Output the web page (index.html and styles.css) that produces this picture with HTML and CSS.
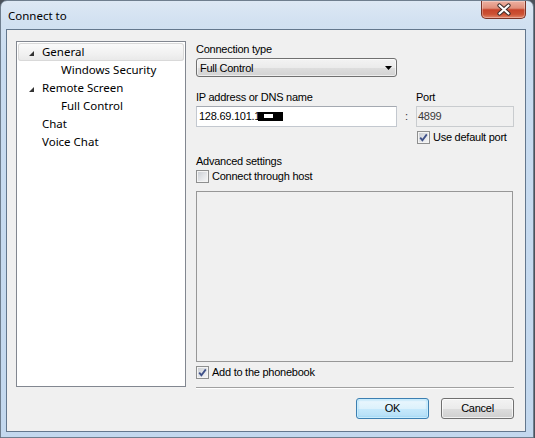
FILE: index.html
```html
<!DOCTYPE html>
<html>
<head>
<meta charset="utf-8">
<title>Connect to</title>
<link rel="stylesheet" href="styles.css">
</head>
<body>
<div class="window">
  <div class="titlebar">
    <span class="title">Connect to</span>
    <div class="close">
      <svg width="45" height="18" viewBox="0 0 45 18">
        <path d="M18.5 4.5 L27.5 12.5 M27.5 4.5 L18.5 12.5" stroke="#3a2a28" stroke-width="4.2" stroke-linecap="round" fill="none"/>
        <path d="M18.5 4.5 L27.5 12.5 M27.5 4.5 L18.5 12.5" stroke="#ffffff" stroke-width="2.2" stroke-linecap="round" fill="none"/>
      </svg>
    </div>
  </div>
  <div class="client">
    <div class="tree">
      <div class="node selected"><span class="twisty"><svg width="5" height="5" viewBox="0 0 5 5"><polygon points="5,0 5,5 0,5" fill="#333"/></svg></span>General</div>
      <div class="node child">Windows Security</div>
      <div class="node"><span class="twisty"><svg width="5" height="5" viewBox="0 0 5 5"><polygon points="5,0 5,5 0,5" fill="#333"/></svg></span>Remote Screen</div>
      <div class="node child">Full Control</div>
      <div class="node leaf">Chat</div>
      <div class="node leaf">Voice Chat</div>
    </div>
    <div class="form">
      <div class="label first">Connection type</div>
      <div class="combo">
        <span>Full Control</span>
        <svg width="7" height="4" viewBox="0 0 7 4"><polygon points="0,0 7,0 3.5,4" fill="#000"/></svg>
      </div>
      <div class="iprow">
        <div class="ipcol">
          <div class="label">IP address or DNS name</div>
          <div class="input">128.69.101.1<span class="redact"></span></div>
        </div>
        <div class="colon">:</div>
        <div class="portcol">
          <div class="label">Port</div>
          <div class="input disabled">4899</div>
          <div class="check"><span class="box"><svg width="11" height="11" viewBox="0 0 11 11"><path d="M2.2 5.6 L4.4 8.2 L8.8 2.4" stroke="#3f5189" stroke-width="1.8" fill="none"/></svg></span>Use default port</div>
        </div>
      </div>
      <div class="label adv">Advanced settings</div>
      <div class="check host"><span class="box"></span>Connect through host</div>
      <div class="hostbox"></div>
      <div class="check add"><span class="box"><svg width="11" height="11" viewBox="0 0 11 11"><path d="M2.2 5.6 L4.4 8.2 L8.8 2.4" stroke="#3f5189" stroke-width="1.8" fill="none"/></svg></span>Add to the phonebook</div>
      <div class="sep"></div>
      <div class="buttons">
        <div class="btn default">OK</div>
        <div class="btn">Cancel</div>
      </div>
    </div>
  </div>
</div>
</body>
</html>
```
FILE: styles.css
```css
* { box-sizing: border-box; }
html, body { margin: 0; padding: 0; }
body {
  width: 535px;
  height: 438px;
  overflow: hidden;
  background: #4b525b;
  font-family: "Liberation Sans", Arial, sans-serif;
  font-size: 11px;
  letter-spacing: -0.25px;
  color: #000;
}
.window {
  position: relative;
  width: 534px;
  height: 438px;
  border: 1px solid #6f7e8e;
  border-radius: 7px 7px 0 0;
  background: linear-gradient(180deg, #dde8f4 0, #d2e1f1 20px, #c9dcf0 60px, #c3d8ee 100%);
  padding: 0 7px 5px 5px;
  display: flex;
  flex-direction: column;
}
.titlebar {
  height: 28px;
  flex: none;
  display: flex;
  align-items: flex-start;
}
.title {
  font-family: "Noto Sans", sans-serif;
  font-size: 11.5px;
  letter-spacing: 0;
  line-height: 16px;
  margin: 7px 0 0 2px;
  color: #000;
}
.close {
  position: absolute;
  top: 0;
  right: 7px;
  width: 45px;
  height: 18px;
  border: 1px solid #7a3326;
  border-top: none;
  border-radius: 0 0 5px 5px;
  background: linear-gradient(180deg, #eeb1a2 0, #e08f7b 42%, #c7432a 52%, #cc5234 78%, #e3866a 100%);
  box-shadow: inset 0 0 0 1px rgba(255,255,255,0.3);
}
.close svg { display: block; position: absolute; left: -1px; top: 0; }
.client {
  flex: 1;
  background: #f0f0f0;
  border: 1px solid #63778d;
  display: flex;
  align-items: flex-start;
  gap: 10px;
  padding: 10px 11px 0 9px;
}
.tree {
  width: 170px;
  height: 346px;
  flex: none;
  margin-top: 1px;
  background: #fff;
  border: 1px solid #828790;
  padding: 1px 1px 0;
  font-family: "Noto Sans", sans-serif;
  font-size: 11.5px;
  letter-spacing: 0;
}
.node {
  height: 18px;
  line-height: 18px;
  display: flex;
  align-items: center;
  padding-left: 11px;
  white-space: nowrap;
}
.node.child { padding-left: 43px; }
.node.leaf { padding-left: 24px; }
.node.selected {
  border-radius: 3px;
  background: linear-gradient(180deg, #fbfbfb 0, #f1f1f1 60%, #e8e8e8 100%);
  box-shadow: inset 0 0 0 1px #d9d9d9;
}
.twisty {
  width: 13px;
  height: 18px;
  flex: none;
  display: flex;
  align-items: flex-end;
  padding-bottom: 5px;
}
.twisty svg { display: block; }
.form {
  width: 318px;
  flex: none;
  display: flex;
  flex-direction: column;
}
.label {
  height: 15px;
  line-height: 15px;
  white-space: nowrap;
}
.label.first { margin-top: 2px; }
.combo {
  margin-top: 1px;
  width: 201px;
  height: 19px;
  border: 1px solid #707070;
  border-radius: 3px;
  background: linear-gradient(180deg, #f3f3f3 0, #ebebeb 50%, #dedede 51%, #d2d2d2 100%);
  box-shadow: inset 0 0 0 1px rgba(255,255,255,0.6);
  display: flex;
  align-items: center;
  justify-content: space-between;
  padding: 0 4px 0 3px;
}
.combo svg { display: block; margin-top: 1px; }
.iprow {
  margin-top: 13px;
  display: flex;
}
.ipcol { width: 201px; flex: none; }
.colon {
  width: 19px;
  flex: none;
  margin-top: 16px;
  height: 21px;
  line-height: 21px;
  text-align: center;
  color: #333;
}
.portcol { flex: 1; }
.input {
  position: relative;
  margin-top: 1px;
  height: 21px;
  line-height: 19px;
  border: 1px solid #c3c8cf;
  border-top-color: #a4a9b1;
  background: #fff;
  padding-left: 2px;
  white-space: nowrap;
}
.input.disabled {
  background: #f0f0f0;
  border-color: #c9cccf;
  padding-left: 1px;
  color: #3a3a3a;
}
.redact {
  position: absolute;
  left: 61px;
  top: 5px;
  width: 25px;
  height: 9px;
  background: #fff;
  border-style: solid;
  border-color: #000;
  border-width: 2px 10px 3px 6px;
}
.check {
  height: 15px;
  line-height: 15px;
  display: flex;
  align-items: center;
  white-space: nowrap;
}
.portcol .check { margin-top: 3px; padding-left: 1px; }
.box {
  width: 13px;
  height: 13px;
  flex: none;
  margin-right: 3px;
  border: 1px solid #8e8f8f;
  background: linear-gradient(135deg, #c7cbd1 0, #e4e6e9 55%, #f7f7f7 100%);
  box-shadow: inset 0 0 0 1px #f4f4f4;
  position: relative;
}
.box svg { display: block; position: absolute; left: 0; top: 0; }
.label.adv { margin-top: 9px; }
.check.host { margin-top: 0; }
.hostbox {
  margin-top: 7px;
  height: 171px;
  width: 317px;
  border: 1px solid #979797;
  background: #f0f0f0;
}
.check.add { margin-top: 3px; }
.sep {
  margin-top: 7px;
  height: 2px;
  border-top: 1px solid #a0a0a0;
  border-bottom: 1px solid #ffffff;
}
.buttons {
  margin-top: 9px;
  display: flex;
  justify-content: flex-end;
  gap: 12px;
}
.btn {
  width: 73px;
  height: 21px;
  line-height: 19px;
  text-align: center;
  border: 1px solid #707070;
  border-radius: 3px;
  background: linear-gradient(180deg, #f3f3f3 0, #ebebeb 50%, #dddddd 51%, #cfcfcf 100%);
  box-shadow: inset 0 0 0 1px rgba(255,255,255,0.7);
}
.btn.default {
  border-color: #3c7fb1;
  background: linear-gradient(180deg, #ecf7fd 0, #dcf1fc 50%, #c6e9fc 51%, #b4def6 100%);
  box-shadow: inset 0 0 0 1px #c9ecfd, inset 0 0 2px 1px #8fd0f2;
}
```
